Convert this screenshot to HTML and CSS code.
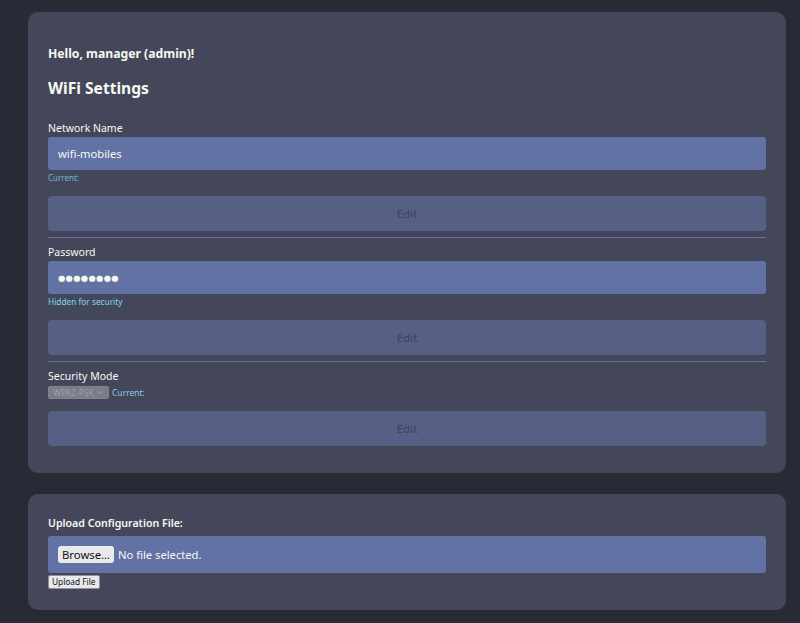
FILE: index.html
```html
<!DOCTYPE html>
<html lang="en">
<head>
<meta charset="utf-8">
<title>WiFi Settings</title>
<link rel="stylesheet" href="styles.css">
</head>
<body>
<main class="page">
  <section class="card">
    <p class="greeting">Hello, manager (admin)!</p>
    <h2 class="title">WiFi Settings</h2>

    <div class="group">
      <label class="label" for="ssid">Network Name</label>
      <input class="field" id="ssid" type="text" value="wifi-mobiles">
      <div class="hint">Current:</div>
      <button class="edit" type="button" disabled>Edit</button>
    </div>

    <div class="group">
      <label class="label" for="pw">Password</label>
      <input class="field pw" id="pw" type="text" value="●●●●●●●●">
      <div class="hint hint-lg">Hidden for security</div>
      <button class="edit" type="button" disabled>Edit</button>
    </div>

    <div class="group last">
      <label class="label" for="mode">Security Mode</label>
      <div class="mode-row">
        <select class="select" id="mode" disabled>
          <option>WPA2-PSK</option>
        </select>
        <span class="hint-inline">Current:</span>
      </div>
      <button class="edit" type="button" disabled>Edit</button>
    </div>
  </section>

  <section class="card card-upload">
    <p class="upload-label">Upload Configuration File:</p>
    <div class="file-box">
      <button class="browse" type="button">Browse…</button>
      <span class="file-name">No file selected.</span>
    </div>
    <button class="upload" type="button">Upload File</button>
  </section>
</main>
</body>
</html>
```

FILE: styles.css
```css
* { box-sizing: border-box; }

html, body {
  margin: 0;
  background: #282a36;
}

body {
  font-family: "Noto Sans", "DejaVu Sans", sans-serif;
  color: #f8f8f2;
}

.page {
  padding: 12px 14px 14px 28px;
  display: flex;
  flex-direction: column;
  gap: 21px;
}

.card {
  background: #44475a;
  border-radius: 10px;
  padding: 20px 20px 27px;
}

.greeting {
  margin: 12px 0 0;
  font-size: 12.2px;
  line-height: 19px;
  font-weight: 700;
}

.title {
  margin: 14px 0 0;
  font-size: 15.6px;
  line-height: 23px;
  font-weight: 700;
}

.group {
  margin-top: 21px;
  padding-bottom: 6px;
  border-bottom: 1px solid #6272a4;
}

.group + .group {
  margin-top: 7px;
}

.group.last {
  border-bottom: none;
  padding-bottom: 0;
}

.label {
  display: block;
  font-size: 10.5px;
  line-height: 15px;
  margin-bottom: 1px;
}

.field {
  display: block;
  width: 100%;
  height: 33px;
  border: none;
  border-radius: 3px;
  background: #6272a4;
  color: #f8f8f2;
  font-family: inherit;
  font-size: 11.2px;
  padding: 0 10px;
  outline: none;
}

.field.pw {
  font-family: "DejaVu Sans", sans-serif;
  font-size: 8.4px;
  letter-spacing: 0.3px;
}

.hint {
  margin-top: 2px;
  font-size: 8px;
  line-height: 12px;
  color: #74b7cb;
}

.hint.hint-lg {
  font-size: 8.3px;
  color: #86d6ea;
}

.edit {
  display: block;
  width: 100%;
  height: 35px;
  margin-top: 12px;
  border: none;
  border-radius: 4px;
  background: #566084;
  color: #3c4260;
  font-family: inherit;
  font-size: 11.5px;
}

.mode-row {
  display: flex;
  align-items: center;
  gap: 3px;
  margin-top: 2px;
  height: 13px;
}

.select {
  appearance: none;
  -webkit-appearance: none;
  width: 61px;
  height: 13px;
  border: 1px solid #82848f;
  border-radius: 2px;
  background: #7a7c89 url("data:image/svg+xml,%3Csvg xmlns='http://www.w3.org/2000/svg' width='8' height='5' viewBox='0 0 8 5'%3E%3Cpath d='M1 1l3 3 3-3' fill='none' stroke='%239d9fa8' stroke-width='1'/%3E%3C/svg%3E") no-repeat right 4px center;
  color: #9d9fa8;
  font-family: inherit;
  font-size: 8.5px;
  line-height: 11px;
  padding: 0 0 0 4px;
  opacity: 1;
}

.hint-inline {
  font-size: 8.5px;
  color: #80cfe4;
}

.mode-row + .edit {
  margin-top: 12px;
}

.card-upload {
  padding: 20px 20px 21px;
}

.upload-label {
  margin: 2px 0 0;
  font-size: 10.6px;
  line-height: 15px;
  font-weight: 600;
}

.file-box {
  margin-top: 5px;
  height: 37px;
  background: #6272a4;
  border-radius: 3px;
  display: flex;
  align-items: center;
  padding: 0 10px;
  gap: 4px;
}

.browse {
  height: 17px;
  padding: 0 4px;
  border: none;
  border-radius: 3px;
  background: #e9e9ed;
  color: #111;
  font-family: inherit;
  font-size: 11.3px;
  line-height: 17px;
}

.file-name {
  font-size: 11.2px;
  color: #f8f8f2;
}

.upload {
  display: block;
  margin-top: 2px;
  height: 14px;
  padding: 0 3px;
  border: 1px solid #8f8f9d;
  border-radius: 2px;
  background: #e9e9ed;
  color: #111;
  font-family: inherit;
  font-size: 8.3px;
  line-height: 12px;
}
```
